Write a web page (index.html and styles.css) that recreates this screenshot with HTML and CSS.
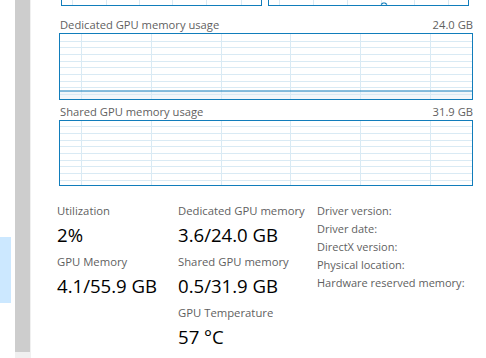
FILE: index.html
```html
<!DOCTYPE html>
<html lang="en">
<head>
  <meta charset="UTF-8" />
  <meta name="viewport" content="width=device-width, initial-scale=1.0"/>
  <title>GPU - Performance</title>
  <link rel="stylesheet" href="styles.css">
</head>
<body>

  <div class="window">
    <div class="sidebar">
      <div class="sidebar-item selected"></div>
    </div>

    <div class="scrollbar">
      <div class="thumb"></div>
    </div>

    <div class="main">
      <div class="top-graphs">
        <div class="mini-graph">
          <svg width="199" height="60" viewBox="0 0 199 60">
            <g class="grid">
              <line x1="10.5" y1="0" x2="10.5" y2="60" />
              <line x1="44.5" y1="0" x2="44.5" y2="60" />
              <line x1="77.5" y1="0" x2="77.5" y2="60" />
              <line x1="110.5" y1="0" x2="110.5" y2="60" />
              <line x1="144.5" y1="0" x2="144.5" y2="60" />
              <line x1="179.5" y1="0" x2="179.5" y2="60" />
            </g>
          </svg>
        </div>
        <div class="mini-graph">
          <svg width="199" height="60" viewBox="0 0 199 60">
            <g class="grid">
              <line x1="10.5" y1="0" x2="10.5" y2="60" />
              <line x1="44.5" y1="0" x2="44.5" y2="60" />
              <line x1="78.5" y1="0" x2="78.5" y2="60" />
              <line x1="112.5" y1="0" x2="112.5" y2="60" />
              <line x1="145.5" y1="0" x2="145.5" y2="60" />
              <line x1="179.5" y1="0" x2="179.5" y2="60" />
            </g>
            <polyline class="data" points="112,59.5 114,58 116,58 118,59.5" />
          </svg>
        </div>
      </div>

      <div class="graph-header">
        <span>Dedicated GPU memory usage</span>
        <span>24.0 GB</span>
      </div>
      <div class="graph">
        <svg width="412" height="65" viewBox="0 0 412 65">
          <rect class="fill" x="0" y="57" width="412" height="8" />
          <g class="grid">
            <line x1="0" y1="7.5" x2="412" y2="7.5" />
            <line x1="0" y1="13.5" x2="412" y2="13.5" />
            <line x1="0" y1="20.5" x2="412" y2="20.5" />
            <line x1="0" y1="27.5" x2="412" y2="27.5" />
            <line x1="0" y1="33.5" x2="412" y2="33.5" />
            <line x1="0" y1="40.5" x2="412" y2="40.5" />
            <line x1="0" y1="47.5" x2="412" y2="47.5" />
            <line x1="0" y1="53.5" x2="412" y2="53.5" />
            <line x1="0" y1="60.5" x2="412" y2="60.5" />
            <line x1="21.5" y1="0" x2="21.5" y2="65" />
            <line x1="91.5" y1="0" x2="91.5" y2="65" />
            <line x1="161.5" y1="0" x2="161.5" y2="65" />
            <line x1="230.5" y1="0" x2="230.5" y2="65" />
            <line x1="300.5" y1="0" x2="300.5" y2="65" />
            <line x1="370.5" y1="0" x2="370.5" y2="65" />
          </g>
          <line class="data" x1="0" y1="57" x2="412" y2="57" />
        </svg>
      </div>

      <div class="graph-header">
        <span>Shared GPU memory usage</span>
        <span>31.9 GB</span>
      </div>
      <div class="graph">
        <svg width="412" height="64" viewBox="0 0 412 64">
          <g class="grid">
            <line x1="0" y1="5.5" x2="412" y2="5.5" />
            <line x1="0" y1="12.5" x2="412" y2="12.5" />
            <line x1="0" y1="19.5" x2="412" y2="19.5" />
            <line x1="0" y1="25.5" x2="412" y2="25.5" />
            <line x1="0" y1="32.5" x2="412" y2="32.5" />
            <line x1="0" y1="39.5" x2="412" y2="39.5" />
            <line x1="0" y1="45.5" x2="412" y2="45.5" />
            <line x1="0" y1="52.5" x2="412" y2="52.5" />
            <line x1="0" y1="59.5" x2="412" y2="59.5" />
            <line x1="21.5" y1="0" x2="21.5" y2="64" />
            <line x1="91.5" y1="0" x2="91.5" y2="64" />
            <line x1="161.5" y1="0" x2="161.5" y2="64" />
            <line x1="230.5" y1="0" x2="230.5" y2="64" />
            <line x1="300.5" y1="0" x2="300.5" y2="64" />
            <line x1="370.5" y1="0" x2="370.5" y2="64" />
          </g>
        </svg>
      </div>

      <div class="stats">
        <div class="stat-col first">
          <div class="stat">
            <div class="stat-label">Utilization</div>
            <div class="stat-value">2%</div>
          </div>
          <div class="stat">
            <div class="stat-label">GPU Memory</div>
            <div class="stat-value">4.1/55.9 GB</div>
          </div>
        </div>
        <div class="stat-col second">
          <div class="stat">
            <div class="stat-label">Dedicated GPU memory</div>
            <div class="stat-value">3.6/24.0 GB</div>
          </div>
          <div class="stat">
            <div class="stat-label">Shared GPU memory</div>
            <div class="stat-value">0.5/31.9 GB</div>
          </div>
          <div class="stat">
            <div class="stat-label">GPU Temperature</div>
            <div class="stat-value">57 °C</div>
          </div>
        </div>
        <div class="info-list">
          <div>Driver version:</div>
          <div>Driver date:</div>
          <div>DirectX version:</div>
          <div>Physical location:</div>
          <div>Hardware reserved memory:</div>
        </div>
      </div>
    </div>
  </div>

</body>
</html>
```

FILE: styles.css
```css
body {
  font-family: "Open Sans", "Noto Sans", sans-serif;
  background-color: #fff;
  margin: 0;
  overflow: hidden;
}

.window {
  display: flex;
  height: 358px;
}

.sidebar {
  width: 15px;
  padding-top: 237px;
}

.sidebar-item.selected {
  width: 11px;
  height: 66px;
  background-color: #cce8ff;
}

.scrollbar {
  width: 16px;
  background-color: #f0f0f0;
}

.scrollbar .thumb {
  width: 15px;
  height: 352px;
  background-color: #cdcdcd;
}

.main {
  flex: 1;
  padding-left: 28px;
}

/* graphs */
.top-graphs {
  display: flex;
  align-items: flex-end;
  gap: 6px;
  height: 6px;
  overflow: hidden;
  padding-left: 2px;
}

.mini-graph {
  border: 1px solid #117dbb;
  line-height: 0;
}

.graph-header {
  display: flex;
  justify-content: space-between;
  width: 414px;
  margin-top: 10px;
  font-size: 11.2px;
  line-height: 17px;
  color: #5f5f5f;
}

.graph-header span:first-child {
  padding-left: 1px;
}

.graph {
  width: 412px;
  border: 1px solid #117dbb;
  line-height: 0;
}

.graph + .graph-header {
  margin-top: 3px;
}

.graph svg,
.mini-graph svg {
  display: block;
}

.grid line {
  stroke: #d9eaf4;
  stroke-width: 1;
}

.fill {
  fill: #f1f6fa;
}

.data {
  fill: none;
  stroke: #117dbb;
  stroke-width: 1.2;
}

/* stats */
.stats {
  display: flex;
  margin-top: 17px;
  margin-left: -2px;
}

.stat-col.first {
  width: 121px;
}

.stat-col.second {
  width: 139px;
}

.stat {
  margin-bottom: 7px;
}

.stat-label {
  font-size: 11.3px;
  line-height: 16px;
  color: #5f5f5f;
  white-space: nowrap;
}

.stat-value {
  margin-top: 4px;
  font-size: 18.6px;
  line-height: 24px;
  color: #000;
  white-space: nowrap;
}

.info-list {
  margin-top: -1px;
  font-size: 11px;
  line-height: 18px;
  color: #5f5f5f;
  white-space: nowrap;
}
```
